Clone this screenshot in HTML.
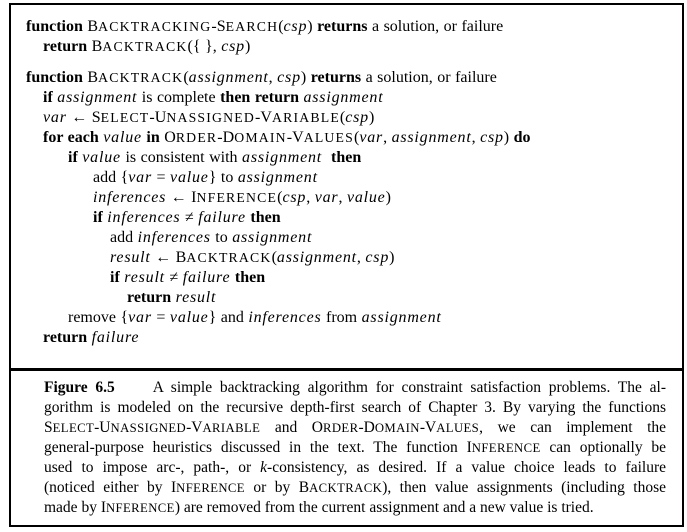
<!DOCTYPE html>
<html><head><meta charset="utf-8"><style>
body{margin:0;width:687px;height:532px;background:#fff;font-family:"Liberation Serif",serif;color:#000;position:relative;overflow:hidden}
.box{position:absolute;left:9px;top:3px;width:671px;height:520px;border:2px solid #000}
.div{position:absolute;left:9px;top:368px;width:675px;height:3px;background:#000}
.l{position:absolute;font-size:16px;white-space:nowrap;line-height:20px;word-spacing:0.5px}
b{font-weight:bold}
i{font-style:italic;letter-spacing:0.8px}
.l small{font-size:0.86em;letter-spacing:1.2px}
.cl small{font-size:0.82em;letter-spacing:0.4px}
.cl{position:absolute;left:44px;width:622px;font-size:15.5px;line-height:20px;text-align:justify;text-align-last:justify;white-space:nowrap}
.cl i{letter-spacing:0}
</style></head><body>
<div class="box"></div><div class="div"></div>
<div class="l" style="left:26px;top:17px"><b>function</b> B<small>ACKTRACKING</small>-S<small>EARCH</small>(<i>csp</i>) <b>returns</b> a solution, or failure</div>
<div class="l" style="left:43px;top:37px"><b>return</b> B<small>ACKTRACK</small>({ }, <i>csp</i>)</div>
<div class="l" style="left:26px;top:68px"><b>function</b> B<small>ACKTRACK</small>(<i>assignment</i>, <i>csp</i>) <b>returns</b> a solution, or failure</div>
<div class="l" style="left:43px;top:88px"><b>if</b> <i>assignment</i> is complete <b>then return</b> <i>assignment</i></div>
<div class="l" style="left:43px;top:108px"><i>var</i> ← S<small>ELECT</small>-U<small>NASSIGNED</small>-V<small>ARIABLE</small>(<i>csp</i>)</div>
<div class="l" style="left:43px;top:128px"><b>for each</b> <i>value</i> <b>in</b> O<small>RDER</small>-D<small>OMAIN</small>-V<small>ALUES</small>(<i>var</i>, <i>assignment</i>, <i>csp</i>) <b>do</b></div>
<div class="l" style="left:68px;top:148px"><b>if</b> <i>value</i> is consistent with <i>assignment</i> &nbsp;<b>then</b></div>
<div class="l" style="left:93px;top:168px">add {<i>var</i> = <i>value</i>} to <i>assignment</i></div>
<div class="l" style="left:93px;top:188px"><i>inferences</i> ← I<small>NFERENCE</small>(<i>csp</i>, <i>var</i>, <i>value</i>)</div>
<div class="l" style="left:93px;top:208px"><b>if</b> <i>inferences</i> ≠ <i>failure</i> <b>then</b></div>
<div class="l" style="left:110px;top:228px">add <i>inferences</i> to <i>assignment</i></div>
<div class="l" style="left:110px;top:248px"><i>result</i> ← B<small>ACKTRACK</small>(<i>assignment</i>, <i>csp</i>)</div>
<div class="l" style="left:110px;top:268px"><b>if</b> <i>result</i> ≠ <i>failure</i> <b>then</b></div>
<div class="l" style="left:127px;top:288px"><b>return</b> <i>result</i></div>
<div class="l" style="left:68px;top:308px">remove {<i>var</i> = <i>value</i>} and <i>inferences</i> from <i>assignment</i></div>
<div class="l" style="left:43px;top:328px"><b>return</b> <i>failure</i></div>
<div class="cl" style="top:378px"><b>Figure 6.5</b>&nbsp;&nbsp;&nbsp;&nbsp; A simple backtracking algorithm for constraint satisfaction problems. The al-</div>
<div class="cl" style="top:398px">gorithm is modeled on the recursive depth-first search of Chapter 3. By varying the functions</div>
<div class="cl" style="top:418px">S<small>ELECT</small>-U<small>NASSIGNED</small>-V<small>ARIABLE</small> and O<small>RDER</small>-D<small>OMAIN</small>-V<small>ALUES</small>, we can implement the</div>
<div class="cl" style="top:438px">general-purpose heuristics discussed in the text. The function I<small>NFERENCE</small> can optionally be</div>
<div class="cl" style="top:458px">used to impose arc-, path-, or <i>k</i>-consistency, as desired. If a value choice leads to failure</div>
<div class="cl" style="top:478px">(noticed either by I<small>NFERENCE</small> or by B<small>ACKTRACK</small>), then value assignments (including those</div>
<div class="cl" style="top:498px;text-align-last:left">made by I<small>NFERENCE</small>) are removed from the current assignment and a new value is tried.</div>
</body></html>
